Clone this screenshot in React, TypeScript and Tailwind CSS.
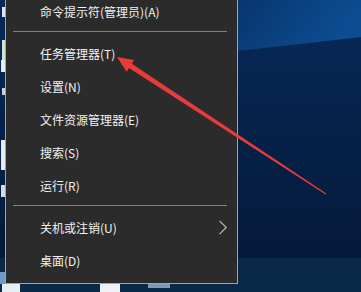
import React from "react";

const font = { fontFamily: '"Noto Sans CJK SC", "Noto Sans", sans-serif' };

function Item({ label, arrow }: { label: string; arrow?: boolean }) {
  return (
    <div className="relative flex h-[33px] items-center pl-[34px] text-[12px] text-[#f2f2f2]">
      <span>{label}</span>
      {arrow && (
        <svg className="absolute left-[212px] top-[9px]" width="10" height="15" viewBox="0 0 10 15">
          <path d="M1.5 0.8 L8.3 7.5 L1.5 14.2" fill="none" stroke="#bdbdbd" strokeWidth="1.1" />
        </svg>
      )}
    </div>
  );
}

function Sep() {
  return (
    <div className="h-[9px] pt-[3px]">
      <div className="ml-[7px] h-px w-[214px] bg-[#7f7f7f]" />
    </div>
  );
}

export default function App() {
  return (
    <div className="relative h-[292px] w-[361px] overflow-hidden bg-[#061d3e]" style={font}>
      <svg className="absolute inset-0" width="361" height="292" viewBox="0 0 361 292">
        <defs>
          <linearGradient id="deep" x1="0" y1="0" x2="0" y2="1">
            <stop offset="0" stopColor="#07295a" />
            <stop offset="1" stopColor="#051a39" />
          </linearGradient>
          <linearGradient id="band" x1="0" y1="0" x2="1" y2="0.3">
            <stop offset="0" stopColor="#08346c" />
            <stop offset="1" stopColor="#0c4d92" />
          </linearGradient>
        </defs>
        <rect x="0" y="0" width="361" height="258" fill="url(#deep)" />
        <polygon points="230,0 361,0 361,37 230,52" fill="url(#band)" />
        <rect x="0" y="258" width="361" height="34" fill="#0a2947" />
        {/* desktop icon fragments at left edge */}
        <rect x="2" y="7" width="3" height="10" fill="#dfe6ee" />
        <rect x="2" y="40" width="3" height="32" fill="#cfe6c8" />
        <rect x="1" y="60" width="4" height="12" fill="#e8eef2" />
        <rect x="2" y="88" width="3" height="7" fill="#c8d2dc" />
        <rect x="1" y="140" width="4" height="30" fill="#e6ecf2" />
        <rect x="1" y="185" width="4" height="12" fill="#d4dce4" />
        <rect x="0" y="272" width="10" height="12" fill="#6f9cc4" />
        <rect x="2" y="284" width="18" height="8" fill="#e9eef3" />
        <rect x="100" y="284" width="20" height="8" fill="#eef2f6" />
        <rect x="148" y="284" width="22" height="4" fill="#7f9ab4" />
      </svg>

      <div className="relative ml-[5px] -mt-[6px] w-[233px] border border-[#a3a3a3] bg-[#2b2b2b] pb-[6px]">
        <Item label="命令提示符(管理员)(A)" />
        <Sep />
        <Item label="任务管理器(T)" />
        <Item label="设置(N)" />
        <Item label="文件资源管理器(E)" />
        <Item label="搜索(S)" />
        <Item label="运行(R)" />
        <Sep />
        <Item label="关机或注销(U)" arrow />
        <Item label="桌面(D)" />
      </div>

      <svg className="pointer-events-none absolute inset-0" width="361" height="292" viewBox="0 0 361 292">
        <polygon
          points="117,57 134.2,60 131.8,63.7 326.3,193.5 325.7,194.5 129,67.9 126.6,71.7"
          fill="#ea3b3b"
        />
      </svg>
    </div>
  );
}
